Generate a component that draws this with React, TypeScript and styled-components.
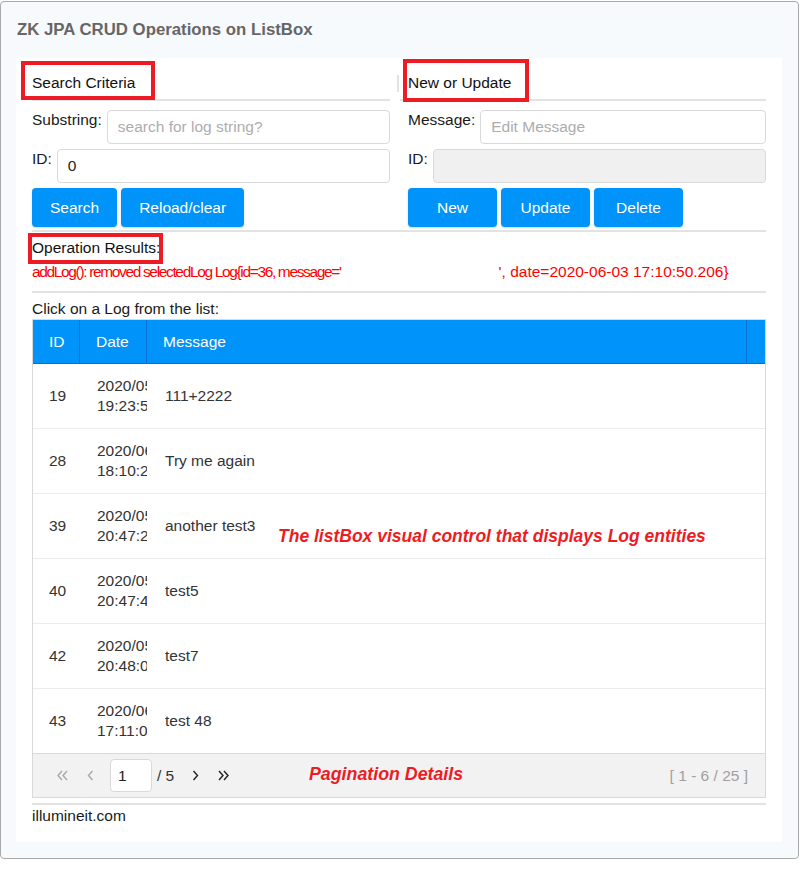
import styled, { createGlobalStyle } from "styled-components";

const BLUE = "#0093f9";
const MARK = "#ed1c24";

interface LogRow {
  id: number;
  date: string;
  message: string;
}

const logs: LogRow[] = [
  { id: 19, date: "2020/05/29 19:23:51", message: "111+2222" },
  { id: 28, date: "2020/06/01 18:10:27", message: "Try me again" },
  { id: 39, date: "2020/05/31 20:47:22", message: "another test3" },
  { id: 40, date: "2020/05/31 20:47:45", message: "test5" },
  { id: 42, date: "2020/05/31 20:48:03", message: "test7" },
  { id: 43, date: "2020/06/03 17:11:05", message: "test 48" },
];

const Chevron = ({ dir, double }: { dir: "left" | "right"; double?: boolean }) => {
  const pts = (x: number) =>
    dir === "left" ? `${x + 4},2 ${x},6.5 ${x + 4},11` : `${x},2 ${x + 4},6.5 ${x},11`;
  return (
    <svg width="13" height="13" viewBox="0 0 13 13" fill="none" stroke="currentColor" strokeWidth="1.4">
      {double ? (
        <>
          <polyline points={pts(2)} />
          <polyline points={pts(7)} />
        </>
      ) : (
        <polyline points={pts(4.5)} />
      )}
    </svg>
  );
};

const App = () => {
  return (
    <>
      <GlobalStyle />
      <Panel>
        <Title>ZK JPA CRUD Operations on ListBox</Title>
        <Content>
          <Columns>
            <Group>
              <GroupHead>
                <HeadText>
                  Search Criteria
                  <Mark $inset="-13px -20px -8px -11px" />
                </HeadText>
              </GroupHead>
              <FieldRow>
                <Label>Substring:</Label>
                <Input placeholder="search for log string?" />
              </FieldRow>
              <FieldRow>
                <Label>ID:</Label>
                <Input defaultValue="0" />
              </FieldRow>
              <Buttons>
                <Button>Search</Button>
                <Button>Reload/clear</Button>
              </Buttons>
            </Group>
            <Splitter />
            <Group>
              <GroupHead $indent>
                <HeadText>
                  New or Update
                  <Mark $inset="-15px -18px -10px -5px" />
                </HeadText>
              </GroupHead>
              <FieldRow $indent>
                <Label>Message:</Label>
                <Input placeholder="Edit Message" />
              </FieldRow>
              <FieldRow $indent>
                <Label>ID:</Label>
                <Input disabled />
              </FieldRow>
              <Buttons $indent>
                <Button $w={89}>New</Button>
                <Button $w={89}>Update</Button>
                <Button $w={89}>Delete</Button>
              </Buttons>
            </Group>
          </Columns>

          <Results>
            <HeadText>
              Operation Results:
              <Mark $inset="-6px -3px -7px -4px" />
            </HeadText>
            <ResultMsg>
              <Squeezed>addLog(): removed selectedLog Log{"{"}id=36, message='</Squeezed>
              <Blank />
              ', date=2020-06-03 17:10:50.206{"}"}
            </ResultMsg>
          </Results>

          <Hint>Click on a Log from the list:</Hint>
          <ListBox>
            <HeadRow>
              <HeadCell>ID</HeadCell>
              <HeadCell>Date</HeadCell>
              <HeadCell>Message</HeadCell>
              <HeadCell />
            </HeadRow>
            {logs.map((log) => (
              <Row key={log.id}>
                <IdCell>{log.id}</IdCell>
                <DateCell>{log.date}</DateCell>
                <MsgCell>{log.message}</MsgCell>
              </Row>
            ))}
            <Pager>
              <PageBtn $muted>
                <Chevron dir="left" double />
              </PageBtn>
              <PageBtn $muted>
                <Chevron dir="left" />
              </PageBtn>
              <PageInput defaultValue="1" />
              <PageOf>/ 5</PageOf>
              <PageBtn>
                <Chevron dir="right" />
              </PageBtn>
              <PageBtn>
                <Chevron dir="right" double />
              </PageBtn>
              <PageNote>Pagination Details</PageNote>
              <PageInfo>[ 1 - 6 / 25 ]</PageInfo>
            </Pager>
            <ListNote>The listBox visual control that displays Log entities</ListNote>
          </ListBox>
          <Footer>illumineit.com</Footer>
        </Content>
      </Panel>
    </>
  );
};

const GlobalStyle = createGlobalStyle`
  body {
    margin: 0;
    background: #fff;
    font-family: "Liberation Sans", Arial, sans-serif;
    font-size: 15.5px;
    color: #222;
  }
  * { box-sizing: border-box; }
`;

const Panel = styled.div`
  width: 799px;
  margin-top: 1px;
  background: #f7fafd;
  border: 1px solid #a9a9a9;
  border-radius: 4px;
  padding: 0 16px 16px 15px;
`;

const Title = styled.div`
  padding: 18px 0 18px 1px;
  line-height: 20px;
  font-size: 16.8px;
  font-weight: bold;
  color: #666;
`;

const Content = styled.div`
  background: #fff;
  padding: 0 16px 17px;
`;

const Columns = styled.div`
  display: grid;
  grid-template-columns: 358px 10px 1fr;
`;

const Splitter = styled.div`
  justify-self: end;
  width: 2px;
  height: 17px;
  margin: 17px 1px 0 0;
  background: #e2e2e2;
`;

const Group = styled.div`
  display: flex;
  flex-direction: column;
  gap: 5px;
`;

const GroupHead = styled.div<{ $indent?: boolean }>`
  padding: 16px 0 7px ${(p) => (p.$indent ? "8px" : "0")};
  border-bottom: 2px solid #e3e3e3;
  line-height: 18px;
  margin-bottom: 4px;
`;

const HeadText = styled.span`
  position: relative;
  display: inline-block;
  align-self: flex-start;
  line-height: 18px;
  color: #111;
`;

const Mark = styled.span<{ $inset: string }>`
  position: absolute;
  inset: ${(p) => p.$inset};
  border: 4px solid ${MARK};
  pointer-events: none;
`;

const FieldRow = styled.div<{ $indent?: boolean }>`
  display: flex;
  align-items: flex-start;
  gap: 5px;
  padding-left: ${(p) => (p.$indent ? "8px" : "0")};
`;

const Label = styled.label`
  line-height: 18px;
  padding-top: 1px;
  white-space: nowrap;
  color: #1a1a1a;
`;

const Input = styled.input`
  flex: 1;
  min-width: 0;
  height: 34px;
  padding: 0 10px;
  border: 1px solid #d9d9d9;
  border-radius: 4px;
  font: inherit;
  color: #222;
  background: #fff;
  outline: none;
  &::placeholder {
    color: #adadad;
  }
  &:disabled {
    background: #f0f0f0;
  }
`;

const Buttons = styled.div<{ $indent?: boolean }>`
  display: flex;
  gap: 4px;
  padding-left: ${(p) => (p.$indent ? "8px" : "0")};
`;

const Button = styled.button<{ $w?: number }>`
  height: 39px;
  width: ${(p) => (p.$w ? `${p.$w}px` : "auto")};
  padding: 0 18px;
  border: none;
  border-radius: 4px;
  background: ${BLUE};
  color: #fff;
  font: inherit;
  box-shadow: 0 1px 2px rgba(0, 0, 0, 0.18);
`;

const Results = styled.div`
  margin-top: 3px;
  border-top: 2px solid #e3e3e3;
  border-bottom: 2px solid #e3e3e3;
  padding: 7px 0 10px;
  display: flex;
  flex-direction: column;
  align-items: flex-start;
  gap: 6px;
`;

const ResultMsg = styled.div`
  color: #f00;
  line-height: 18px;
  white-space: nowrap;
`;

const Squeezed = styled.span`
  letter-spacing: -1.35px;
`;

const Blank = styled.span`
  display: inline-block;
  width: 158px;
`;

const Hint = styled.div`
  line-height: 18px;
  padding-top: 7px;
  margin-bottom: 1px;
  color: #1a1a1a;
`;

const ListBox = styled.div`
  position: relative;
  border: 1px solid #d9d9d9;
`;

const HeadRow = styled.div`
  display: grid;
  grid-template-columns: 47px 67px 600px 1fr;
  background: ${BLUE};
  border-bottom: 1px solid #0a6fd6;
`;

const HeadCell = styled.div`
  height: 43px;
  line-height: 43px;
  padding-left: 16px;
  color: #fff;
  border-right: 1px solid #0a6fd6;
  &:last-child {
    border-right: none;
  }
`;

const Row = styled.div`
  display: grid;
  grid-template-columns: 47px 67px 1fr;
  height: 65px;
  border-bottom: 1px solid #ececec;
  color: #333;
`;

const IdCell = styled.div`
  display: flex;
  align-items: center;
  padding-left: 16px;
`;

const DateCell = styled.div`
  display: flex;
  align-items: center;
  padding-left: 17px;
  line-height: 20px;
  overflow: hidden;
`;

const MsgCell = styled.div`
  display: flex;
  align-items: center;
  padding-left: 18px;
`;

const Pager = styled.div`
  position: relative;
  display: flex;
  align-items: center;
  height: 44px;
  padding: 0 17px 0 15px;
  background: #f2f2f2;
  border-top: 1px solid #d9d9d9;
  margin-top: -1px;
`;

const PageBtn = styled.span<{ $muted?: boolean }>`
  display: flex;
  justify-content: center;
  align-items: center;
  width: 28px;
  height: 28px;
  color: ${(p) => (p.$muted ? "#a8a8a8" : "#222")};
`;

const PageInput = styled.input`
  width: 42px;
  height: 33px;
  margin-left: 6px;
  padding: 0 7px;
  border: 1px solid #d9d9d9;
  border-radius: 4px;
  font: inherit;
  color: #222;
  outline: none;
`;

const PageOf = styled.span`
  width: 29px;
  padding-left: 5px;
  color: #333;
`;

const PageNote = styled.span`
  position: absolute;
  left: 276px;
  top: 10px;
  line-height: 20px;
  font-size: 17.8px;
  font-weight: bold;
  font-style: italic;
  color: ${MARK};
`;

const PageInfo = styled.span`
  margin-left: auto;
  color: #a0a0a0;
`;

const ListNote = styled.div`
  position: absolute;
  left: 245px;
  top: 206px;
  line-height: 20px;
  font-size: 17.5px;
  font-weight: bold;
  font-style: italic;
  color: ${MARK};
  white-space: nowrap;
`;

const Footer = styled.div`
  margin-top: 5px;
  border-top: 2px solid #e3e3e3;
  padding-top: 2px;
  line-height: 18px;
  color: #1a1a1a;
`;

export default App;
